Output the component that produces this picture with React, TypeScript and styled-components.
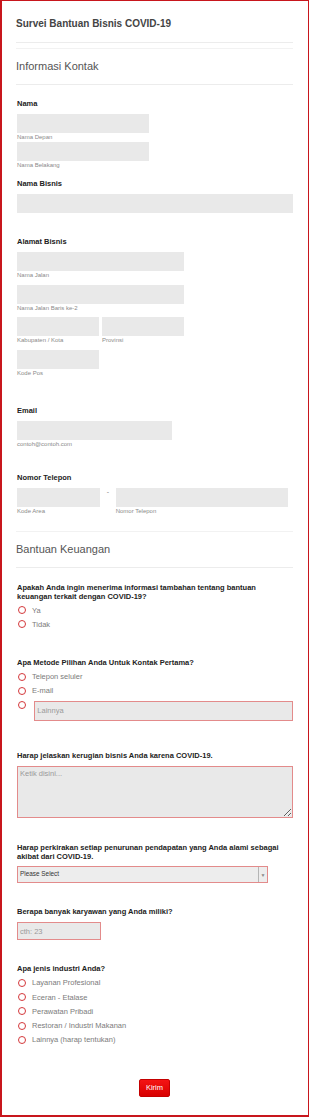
import React from "react";
import styled, { createGlobalStyle } from "styled-components";

const GlobalStyle = createGlobalStyle`
  body {
    margin: 0;
    background: #fff;
    font-family: "Liberation Sans", Arial, sans-serif;
  }
  * {
    box-sizing: border-box;
  }
`;

const Frame = styled.div`
  width: 309px;
  height: 1117px;
  border: 1px solid #c8161d;
  border-left-width: 2px;
  border-bottom-width: 2px;
  padding: 0 15px 0 14px;
  background: #fff;
`;

const Header = styled.div`
  padding: 17px 0 12px;
  border-bottom: 1px solid #ececec;
`;

const Title = styled.h1`
  margin: 0;
  font-size: 10px;
  line-height: 12px;
  font-weight: 700;
  color: #444;
`;

const SectionHeader = styled.div<{ $top: number }>`
  margin-top: ${(p) => p.$top}px;
  padding: 10px 0 11px;
  border-top: 1px solid #f2f2f2;
  border-bottom: 1px solid #ececec;
  font-size: 11px;
  line-height: 14px;
  color: #555;
`;

const Field = styled.div<{ $top: number }>`
  margin: ${(p) => p.$top}px 0 0 1px;
`;

const Label = styled.div<{ $gap?: number }>`
  font-size: 7.5px;
  line-height: 9px;
  font-weight: 700;
  color: #222;
  margin-bottom: ${(p) => p.$gap ?? 5}px;
`;

const FieldLabel = styled(Label)`
  line-height: 10px;
`;

const Input = styled.input<{ $w?: number; $h?: number; $flagged?: boolean }>`
  display: block;
  width: ${(p) => (p.$w ? `${p.$w}px` : "100%")};
  height: ${(p) => p.$h ?? 19}px;
  margin: 0;
  padding: 0 2px;
  border: ${(p) => (p.$flagged ? "1px solid #e38b8b" : "none")};
  background: #e9e9e9;
  font-family: inherit;
  font-size: 7.5px;
  color: #333;
  outline: none;
  &::placeholder {
    color: #9a9a9a;
  }
`;

const OtherInput = styled(Input)`
  margin-left: 2.3px;
`;

const Sub = styled.div`
  font-size: 6px;
  line-height: 9px;
  color: #8a8a8a;
`;

const Stack = styled.div<{ $gap: number }>`
  display: flex;
  flex-direction: column;
  gap: ${(p) => p.$gap}px;
`;

const Row = styled.div<{ $gap: number }>`
  display: flex;
  gap: ${(p) => p.$gap}px;
`;

const Col = styled.div<{ $w: number }>`
  width: ${(p) => p.$w}px;
  flex: none;
`;

const Dash = styled.div`
  width: 15.7px;
  flex: none;
  text-align: center;
  font-size: 7px;
  line-height: 8px;
  color: #888;
`;

const Options = styled.div<{ $top: number; $row?: number }>`
  margin-top: ${(p) => p.$top}px;
  display: flex;
  flex-direction: column;
  --row: ${(p) => p.$row ?? 14}px;
`;

const Option = styled.label`
  display: flex;
  align-items: center;
  height: var(--row);
  font-size: 7.5px;
  color: #7b7b7b;
`;

const OtherOption = styled.div`
  display: flex;
  align-items: flex-start;
  padding-top: 3.5px;
`;

const Radio = styled.span`
  width: 8px;
  height: 8px;
  flex: none;
  margin: 0 6px 0 1px;
  border: 1.5px solid #d4383b;
  border-radius: 50%;
`;

const TextArea = styled.textarea`
  display: block;
  width: 100%;
  height: 51.7px;
  margin: 6.5px 0 0;
  padding: 2px;
  border: 1px solid #e38b8b;
  background: #e9e9e9;
  font-family: inherit;
  font-size: 7.5px;
  line-height: 9px;
  outline: none;
  &::placeholder {
    color: #9a9a9a;
  }
`;

const SelectBox = styled.div`
  display: flex;
  width: 250.7px;
  height: 16.7px;
  margin-top: 4.8px;
  border: 1px solid #e38b8b;
  background: #ededed;
`;

const SelectText = styled.div`
  flex: 1;
  padding-left: 2px;
  font-size: 6.4px;
  line-height: 14.7px;
  color: #333;
`;

const SelectArrow = styled.div`
  width: 8.5px;
  border-left: 1px solid #b5b5b5;
  display: flex;
  align-items: center;
  justify-content: center;
  font-size: 5px;
  color: #888;
`;

const Actions = styled.div`
  display: flex;
  justify-content: center;
  margin-top: 32.3px;
`;

const SubmitButton = styled.button`
  width: 30.7px;
  height: 17.7px;
  padding: 0;
  border: 1px solid #c40000;
  border-radius: 2px;
  background: linear-gradient(#f41414, #d80000);
  color: #fff;
  font-family: inherit;
  font-size: 7.5px;
`;

const industries = [
  "Layanan Profesional",
  "Eceran - Etalase",
  "Perawatan Pribadi",
  "Restoran / Industri Makanan",
  "Lainnya (harap tentukan)",
];

export default function App() {
  return (
    <Frame>
      <GlobalStyle />
      <Header>
        <Title>Survei Bantuan Bisnis COVID-19</Title>
      </Header>
      <SectionHeader $top={5}>Informasi Kontak</SectionHeader>

      <Field $top={14}>
        <FieldLabel>Nama</FieldLabel>
        <Input $w={132} />
        <Sub>Nama Depan</Sub>
        <Input $w={132} />
        <Sub>Nama Belakang</Sub>
      </Field>

      <Field $top={9}>
        <FieldLabel>Nama Bisnis</FieldLabel>
        <Input $w={275.7} />
      </Field>

      <Field $top={24}>
        <FieldLabel>Alamat Bisnis</FieldLabel>
        <Stack $gap={4.5}>
          <div>
            <Input $w={167} />
            <Sub>Nama Jalan</Sub>
          </div>
          <div>
            <Input $w={167} />
            <Sub>Nama Jalan Baris ke-2</Sub>
          </div>
          <Row $gap={3}>
            <Col $w={82}>
              <Input />
              <Sub>Kabupaten / Kota</Sub>
            </Col>
            <Col $w={82}>
              <Input />
              <Sub>Provinsi</Sub>
            </Col>
          </Row>
          <Col $w={82}>
            <Input />
            <Sub>Kode Pos</Sub>
          </Col>
        </Stack>
      </Field>

      <Field $top={28}>
        <FieldLabel>Email</FieldLabel>
        <Input $w={155} />
        <Sub>contoh@contoh.com</Sub>
      </Field>

      <Field $top={24.5}>
        <FieldLabel>Nomor Telepon</FieldLabel>
        <Row $gap={0}>
          <Col $w={83}>
            <Input />
            <Sub>Kode Area</Sub>
          </Col>
          <Dash>-</Dash>
          <Col $w={172.3}>
            <Input />
            <Sub>Nomor Telepon</Sub>
          </Col>
        </Row>
      </Field>

      <SectionHeader $top={15}>Bantuan Keuangan</SectionHeader>

      <Field $top={15}>
        <Label $gap={0}>
          Apakah Anda ingin menerima informasi tambahan tentang bantuan
          keuangan terkait dengan COVID-19?
        </Label>
        <Options $top={2}>
          <Option>
            <Radio />
            Ya
          </Option>
          <Option>
            <Radio />
            Tidak
          </Option>
        </Options>
      </Field>

      <Field $top={26.5}>
        <Label $gap={0}>Apa Metode Pilihan Anda Untuk Kontak Pertama?</Label>
        <Options $top={3}>
          <Option>
            <Radio />
            Telepon seluler
          </Option>
          <Option>
            <Radio />
            E-mail
          </Option>
          <OtherOption>
            <Radio />
            <OtherInput $flagged $h={19.7} placeholder="Lainnya" />
          </OtherOption>
        </Options>
      </Field>

      <Field $top={30}>
        <Label $gap={0}>Harap jelaskan kerugian bisnis Anda karena COVID-19.</Label>
        <TextArea placeholder="Ketik disini..." />
      </Field>

      <Field $top={25.5}>
        <Label $gap={0}>
          Harap perkirakan setiap penurunan pendapatan yang Anda alami sebagai
          akibat dari COVID-19.
        </Label>
        <SelectBox>
          <SelectText>Please Select</SelectText>
          <SelectArrow>▼</SelectArrow>
        </SelectBox>
      </Field>

      <Field $top={24}>
        <Label $gap={6.2}>Berapa banyak karyawan yang Anda miliki?</Label>
        <Input $flagged $w={84} $h={18.3} placeholder="cth: 23" />
      </Field>

      <Field $top={24}>
        <Label $gap={0}>Apa jenis industri Anda?</Label>
        <Options $top={2.5} $row={14.2}>
          {industries.map((item) => (
            <Option key={item}>
              <Radio />
              {item}
            </Option>
          ))}
        </Options>
      </Field>

      <Actions>
        <SubmitButton>Kirim</SubmitButton>
      </Actions>
    </Frame>
  );
}
